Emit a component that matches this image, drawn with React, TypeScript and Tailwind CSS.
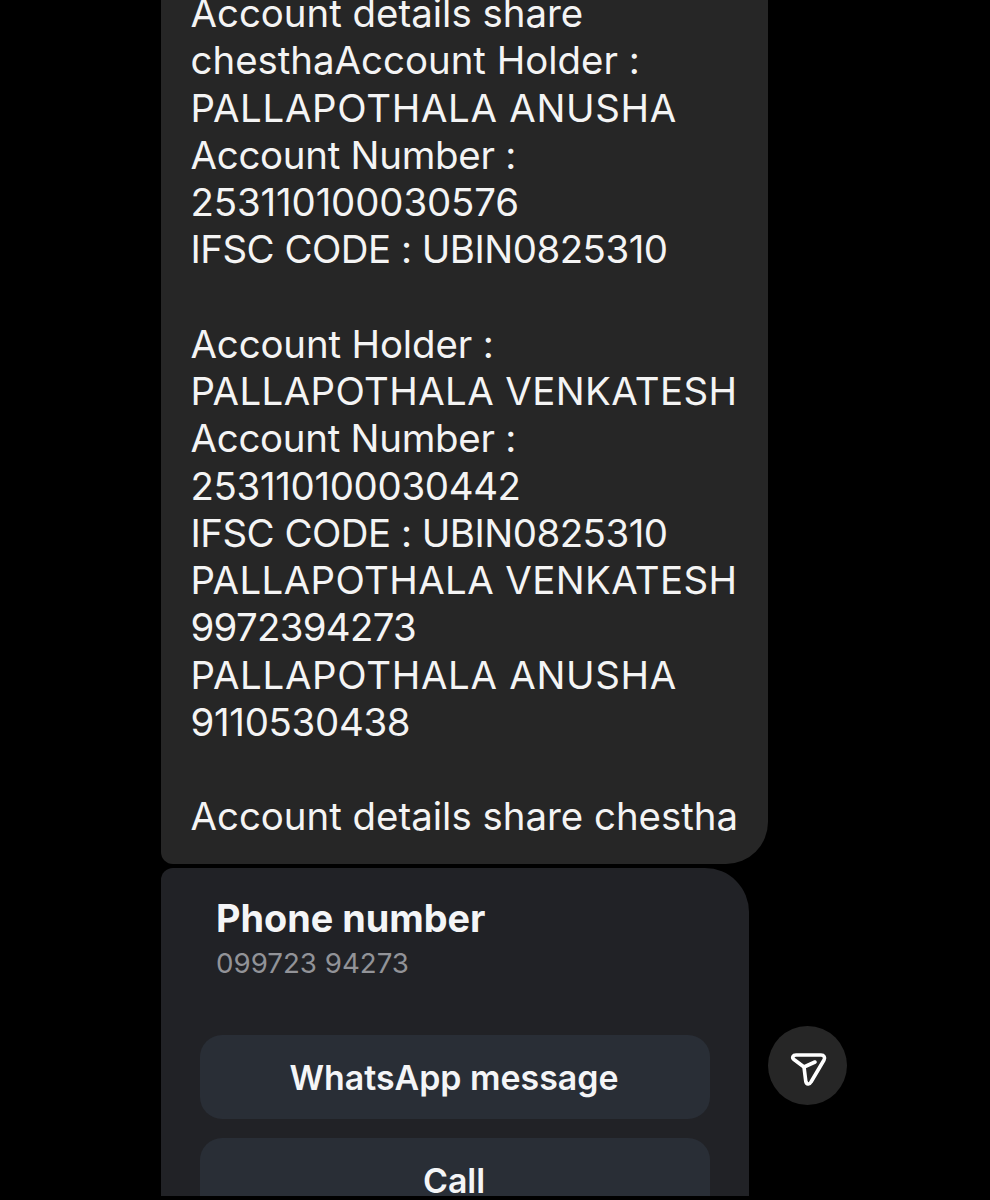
const ANUSHA = "tracking-[0.7px]";
const VENKATESH = "tracking-[0.4px]";
const IFSC = "tracking-[-0.5px]";
const NUMBER = "tracking-[-0.25px]";

const lines = [
  { text: "Account details share", cls: "" },
  { text: "chesthaAccount Holder :", cls: "" },
  { text: "PALLAPOTHALA ANUSHA", cls: ANUSHA },
  { text: "Account Number :", cls: NUMBER },
  { text: "253110100030576", cls: "tracking-[-0.13px]" },
  { text: "IFSC CODE : UBIN0825310", cls: IFSC },
  { text: "", cls: "" },
  { text: "Account Holder :", cls: "tracking-[-0.13px]" },
  { text: "PALLAPOTHALA VENKATESH", cls: VENKATESH },
  { text: "Account Number :", cls: NUMBER },
  { text: "253110100030442", cls: "tracking-[-0.33px]" },
  { text: "IFSC CODE : UBIN0825310", cls: IFSC },
  { text: "PALLAPOTHALA VENKATESH", cls: VENKATESH },
  { text: "9972394273", cls: "tracking-[-0.7px]" },
  { text: "PALLAPOTHALA ANUSHA", cls: ANUSHA },
  { text: "9110530438", cls: "tracking-[-0.3px]" },
  { text: "", cls: "" },
  { text: "Account details share chestha", cls: "" },
];

function SendIcon() {
  return (
    <svg className="mt-[8px]" width="40" height="40" viewBox="0 0 40 40" fill="none" stroke="white" strokeWidth="3.6" strokeLinejoin="round" strokeLinecap="round">
      <path d="M6 10.5 C3.5 8.5 5 6 8 6 H33 C36 6 37.5 8.5 36 11 L23 33 C21.5 35.8 18.5 35.5 17.8 32.5 L16 18 Z" />
      <path d="M16 18 L27 13" />
    </svg>
  );
}

export default function App() {
  return (
    <div className="h-[1200px] bg-black overflow-hidden font-['Inter',sans-serif] [font-feature-settings:'calt'_0]">
      <div className="h-[1196px] overflow-hidden pl-[161px]">
        {/* Message */}
        <div className="w-[607px] -mt-[40px] pt-[30px] pb-[23px] pl-[29.5px] bg-[#262626] rounded-br-[42px] rounded-bl-[12px] text-[38.4px] leading-[47.25px] text-[#f4f4f4] whitespace-nowrap">
          {lines.map((line, i) => (
            <div key={i} className={`h-[47.25px] ${line.cls}`}>
              {line.text}
            </div>
          ))}
        </div>

        {/* Phone number card */}
        <div className="flex items-start mt-[4px]">
          <div className="w-[588px] h-[400px] bg-[#212226] rounded-tl-[12px] rounded-tr-[44px] pt-[28px] px-[39px] shrink-0">
            <div className="pl-[16px] text-[37.8px] leading-[44px] font-bold text-[#f4f5f7]">
              Phone number
            </div>
            <div className="pl-[16px] mt-[5px] text-[27.7px] leading-[36px] text-[#929398]">
              099723 94273
            </div>
            <div className="mt-[54px] flex flex-col gap-[19px] w-[510px]">
              <div className="h-[84px] rounded-[22px] bg-[#292e36] flex items-center justify-center pt-[3px] pr-[2px] text-[33.9px] font-semibold text-[#f4f5f7]">
                WhatsApp message
              </div>
              <div className="h-[84px] rounded-[22px] bg-[#292e36] flex items-center justify-center pt-[3px] pr-[2px] text-[33.9px] font-semibold text-[#f4f5f7]">
                Call
              </div>
            </div>
          </div>
          <div className="ml-[19px] mt-[158px] w-[79px] h-[79px] rounded-full bg-[#262626] flex items-center justify-center shrink-0">
            <SendIcon />
          </div>
        </div>
      </div>
    </div>
  );
}
